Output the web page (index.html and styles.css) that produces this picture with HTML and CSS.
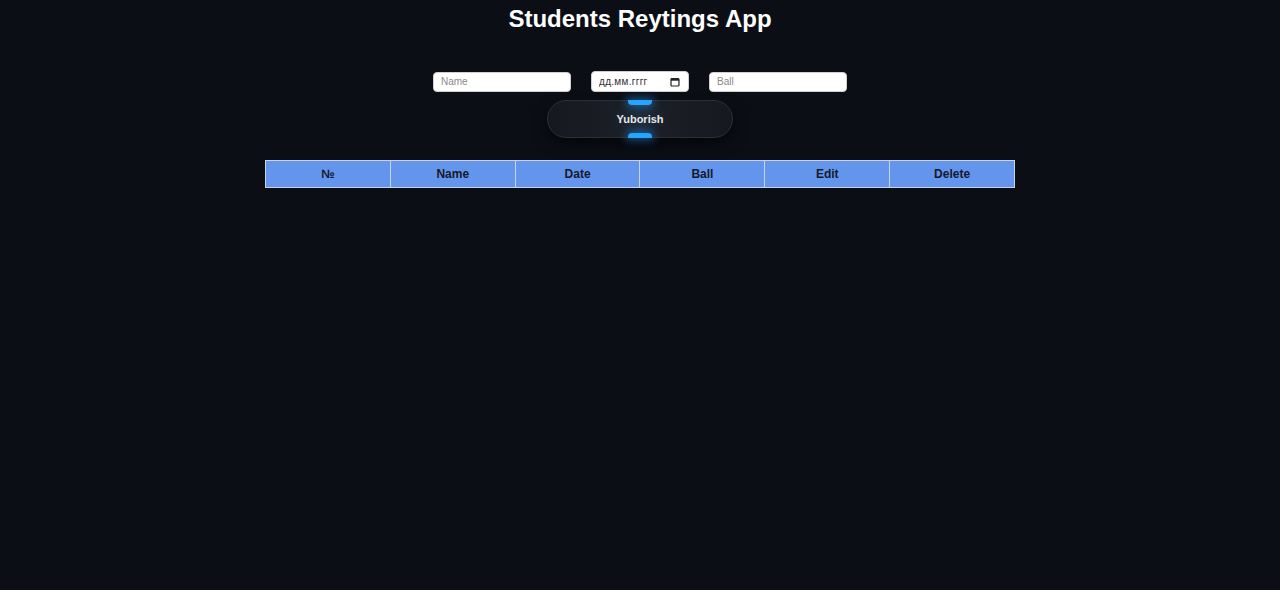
FILE: index.html
```html
<!DOCTYPE html>
<html lang="ru">
<head>
<meta charset="utf-8">
<title>Students Reytings App</title>
<link rel="stylesheet" href="styles.css">
</head>
<body>
<h1 class="title">Students Reytings App</h1>
<form class="form">
  <div class="inputs">
    <input class="field field-name" type="text" placeholder="Name">
    <label class="field field-date">
      <input class="date-text" type="text" placeholder="дд.мм.гггг">
      <svg class="cal" width="10" height="10" viewBox="0 0 10 10" aria-hidden="true">
        <rect x="1" y="1.5" width="8" height="7.5" rx="1" fill="none" stroke="#222" stroke-width="1.2"/>
        <rect x="1" y="1.5" width="8" height="2.2" fill="#222"/>
      </svg>
    </label>
    <input class="field field-ball" type="text" placeholder="Ball">
  </div>
  <button class="btn" type="button"><span class="glow glow-top"></span>Yuborish<span class="glow glow-bottom"></span></button>
</form>
<table class="table">
  <thead>
    <tr><th>№</th><th>Name</th><th>Date</th><th>Ball</th><th>Edit</th><th>Delete</th></tr>
  </thead>
  <tbody></tbody>
</table>
</body>
</html>
```

FILE: styles.css
```css
html, body {
  margin: 0;
  padding: 0;
  background: #0b0e15;
  font-family: "Liberation Sans", Arial, sans-serif;
  color: #fff;
}
.title {
  margin: 0;
  padding-top: 4px;
  text-align: center;
  font-size: 24px;
  font-weight: 700;
  line-height: 30px;
  color: #fff;
}
.form {
  margin-top: 37px;
  display: flex;
  flex-direction: column;
  align-items: center;
}
.inputs {
  display: flex;
  gap: 20px;
  align-items: center;
}
.field {
  box-sizing: border-box;
  height: 20px;
  border: 1px solid #d0d0d0;
  border-radius: 4px;
  background: #fff;
  padding: 0 7px;
  font-family: "Liberation Sans", Arial, sans-serif;
  font-size: 10px;
  color: #222;
  outline: none;
}
.field::placeholder { color: #8a8a8a; }
.field-name, .field-ball { width: 138px; }
.field-date {
  width: 98px;
  height: 21px;
  padding: 0 8px 0 7px;
  display: flex;
  align-items: center;
  gap: 4px;
}
.date-text {
  flex: 1;
  min-width: 0;
  border: 0;
  padding: 0;
  outline: none;
  background: transparent;
  font-family: "Liberation Sans", Arial, sans-serif;
  font-size: 10px;
  letter-spacing: 0.3px;
  color: #333;
}
.date-text::placeholder { color: #333; }
.cal { flex: none; }
.btn {
  position: relative;
  margin-top: 8px;
  width: 186px;
  height: 38px;
  border-radius: 19px;
  border: 1px solid #2b2f37;
  background:
    radial-gradient(ellipse 40px 22px at 50% 50%, rgba(40, 110, 170, 0.18), transparent 70%),
    linear-gradient(90deg, #15181e 0%, #1d2128 50%, #15181e 100%);
  box-shadow: 0 6px 14px rgba(0, 0, 0, 0.55);
  color: #e8e8e8;
  font-family: "Liberation Sans", Arial, sans-serif;
  font-size: 11px;
  font-weight: 700;
  cursor: pointer;
  padding: 0;
}
.glow {
  position: absolute;
  left: 50%;
  width: 24px;
  height: 5px;
  margin-left: -12px;
  background: #23a6ff;
  border-radius: 3px;
  box-shadow: 0 0 8px 2px rgba(35, 150, 255, 0.55);
}
.glow-top { top: -1px; border-radius: 0 0 4px 4px; }
.glow-bottom { bottom: -1px; border-radius: 4px 4px 0 0; }
.table {
  margin: 22px auto 0;
  width: 750px;
  border-collapse: collapse;
  table-layout: fixed;
}
.table th {
  height: 26px;
  padding: 0;
  background: #6495ed;
  border: 1px solid #c9d3e3;
  color: #141a2a;
  font-size: 12px;
  font-weight: 700;
  font-family: "Liberation Sans", Arial, sans-serif;
  text-align: center;
}
```
